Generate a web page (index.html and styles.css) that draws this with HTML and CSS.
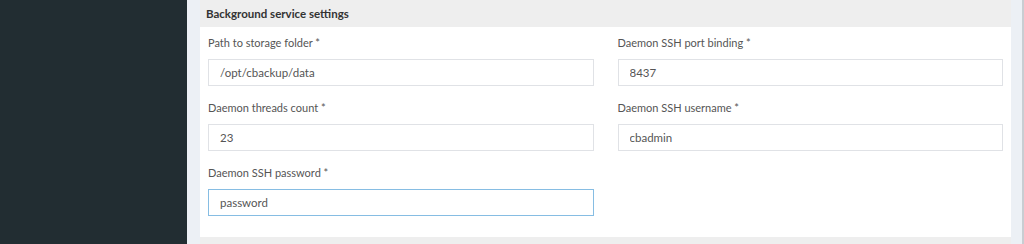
FILE: index.html
```html
<!DOCTYPE html>
<html lang="en">

<head>
  <meta charset="UTF-8" />
  <meta name="viewport" content="width=device-width, initial-scale=1.0" />
  <title>Settings</title>
  <link rel="stylesheet" href="styles.css">
</head>

<body>
  <div class="wrap">
    <!-- 左侧菜单 -->
    <div class="sidebar"></div>
    <!-- 内容区 -->
    <div class="content">
      <div class="panel">
        <div class="panel-head">Background service settings</div>
        <div class="panel-body">
          <div class="field">
            <label>Path to storage folder *</label>
            <input type="text" value="/opt/cbackup/data" />
          </div>
          <div class="field">
            <label>Daemon SSH port binding *</label>
            <input type="text" value="8437" />
          </div>
          <div class="field">
            <label>Daemon threads count *</label>
            <input type="text" value="23" />
          </div>
          <div class="field">
            <label>Daemon SSH username *</label>
            <input type="text" value="cbadmin" />
          </div>
          <div class="field">
            <label>Daemon SSH password *</label>
            <input type="text" class="focus" value="password" />
          </div>
        </div>
        <div class="panel-foot"></div>
      </div>
    </div>
    <div class="scroll"></div>
  </div>
</body>

</html>
```

FILE: styles.css
```css
* {
  margin: 0;
  padding: 0;
  box-sizing: border-box;
}

body {
  font-family: Lato, "Liberation Sans", sans-serif;
  font-size: 11px;
  background: #ecf0f5;
  overflow: hidden;
}

.wrap {
  display: flex;
  height: 244px;
}

.sidebar {
  width: 187px;
  background: #222d32;
}

.content {
  flex: 1;
  padding: 0 11px 0 13px;
}

.scroll {
  width: 2px;
  background: #c9cdd2;
}

.panel {
  background: #eeeeee;
}

.panel-head {
  height: 27px;
  line-height: 27px;
  padding-left: 6px;
  font-size: 11.5px;
  font-weight: bold;
  color: #333;
}

.panel-body {
  background: #fff;
  padding: 7px 8px 8px;
  display: grid;
  grid-template-columns: 1fr 1fr;
  column-gap: 24px;
}

.field {
  margin-bottom: 13px;
}

.field label {
  display: block;
  line-height: 17px;
  margin-bottom: 8px;
  color: #555;
}

.field input {
  display: block;
  width: 100%;
  height: 27px;
  border: 1px solid #e0e2e6;
  padding: 0 11px;
  font: 11.5px Lato, "Liberation Sans", sans-serif;
  color: #555;
  outline: none;
}

.field input.focus {
  border-color: #86bde3;
}

.panel-foot {
  height: 10px;
}
```
